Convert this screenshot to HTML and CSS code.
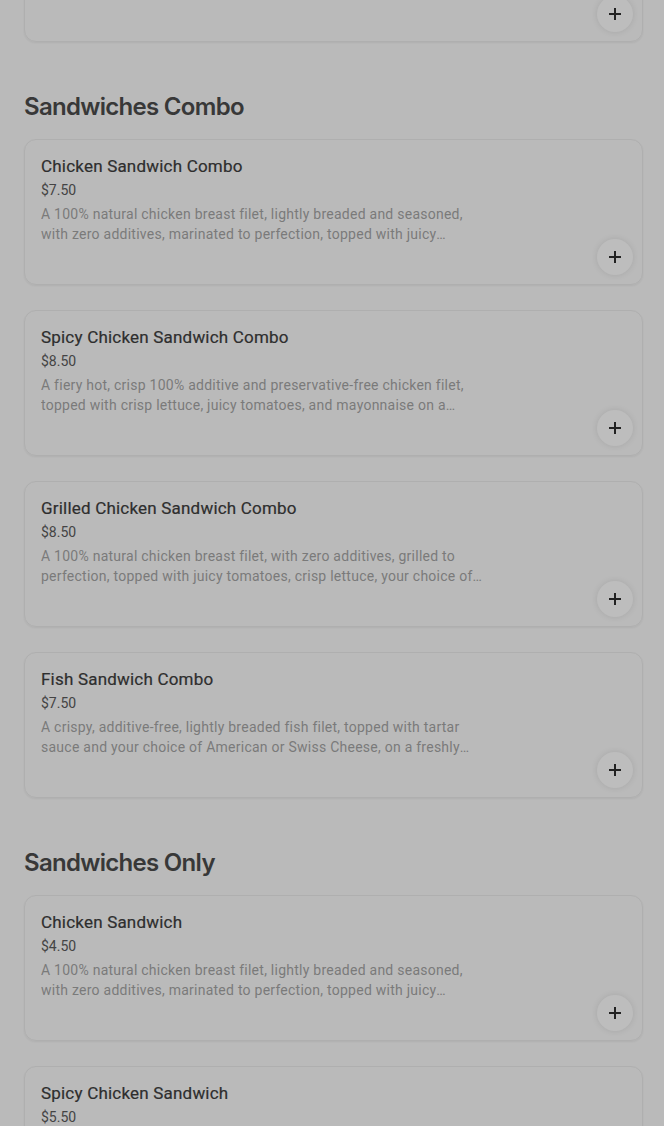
FILE: index.html
```html
<!DOCTYPE html>
<html>
<head>
<meta charset="UTF-8">
<title>Menu</title>
<link rel="stylesheet" href="styles.css">
</head>
<body>
<div id="menu">

<div class="section first">
<div class="item">
<div class="info">
<div class="name">Spicy Deluxe Meal</div>
<div class="price">$9.50</div>
<div class="desc">A fiery hot, crisp chicken filet topped with fresh lettuce, juicy tomatoes and pepper jack cheese, served with your choice of fries and a drink.</div>
</div>
<button class="add"><svg width="12" height="12" viewBox="0 0 12 12"><path d="M6 0v12M0 6h12" stroke="#222" stroke-width="2"/></svg></button>
</div>
</div>

<div class="section">
<h2>Sandwiches Combo</h2>
<div class="item">
<div class="info">
<div class="name">Chicken Sandwich Combo</div>
<div class="price">$7.50</div>
<div class="desc">A 100% natural chicken breast filet, lightly breaded and seasoned, with zero additives, marinated to perfection, topped with juicy pickles, on a toasted buttered bun.</div>
</div>
<button class="add"><svg width="12" height="12" viewBox="0 0 12 12"><path d="M6 0v12M0 6h12" stroke="#222" stroke-width="2"/></svg></button>
</div>
<div class="item">
<div class="info">
<div class="name">Spicy Chicken Sandwich Combo</div>
<div class="price">$8.50</div>
<div class="desc">A fiery hot, crisp 100% additive and preservative-free chicken filet, topped with crisp lettuce, juicy tomatoes, and mayonnaise on a toasted bun.</div>
</div>
<button class="add"><svg width="12" height="12" viewBox="0 0 12 12"><path d="M6 0v12M0 6h12" stroke="#222" stroke-width="2"/></svg></button>
</div>
<div class="item">
<div class="info">
<div class="name">Grilled Chicken Sandwich Combo</div>
<div class="price">$8.50</div>
<div class="desc">A 100% natural chicken breast filet, with zero additives, grilled to perfection, topped with juicy tomatoes, crisp lettuce, your choice of cheese on a toasted bun.</div>
</div>
<button class="add"><svg width="12" height="12" viewBox="0 0 12 12"><path d="M6 0v12M0 6h12" stroke="#222" stroke-width="2"/></svg></button>
</div>
<div class="item">
<div class="info">
<div class="name">Fish Sandwich Combo</div>
<div class="price">$7.50</div>
<div class="desc">A crispy, additive-free, lightly breaded fish filet, topped with tartar sauce and your choice of American or Swiss Cheese, on a freshly toasted bun.</div>
</div>
<button class="add"><svg width="12" height="12" viewBox="0 0 12 12"><path d="M6 0v12M0 6h12" stroke="#222" stroke-width="2"/></svg></button>
</div>
</div>

<div class="section">
<h2>Sandwiches Only</h2>
<div class="item">
<div class="info">
<div class="name">Chicken Sandwich</div>
<div class="price">$4.50</div>
<div class="desc">A 100% natural chicken breast filet, lightly breaded and seasoned, with zero additives, marinated to perfection, topped with juicy pickles, on a toasted buttered bun.</div>
</div>
<button class="add"><svg width="12" height="12" viewBox="0 0 12 12"><path d="M6 0v12M0 6h12" stroke="#222" stroke-width="2"/></svg></button>
</div>
<div class="item">
<div class="info">
<div class="name">Spicy Chicken Sandwich</div>
<div class="price">$5.50</div>
<div class="desc">A fiery hot, crisp 100% additive and preservative-free chicken filet, topped with crisp lettuce, juicy tomatoes, and mayonnaise on a toasted bun.</div>
</div>
<button class="add"><svg width="12" height="12" viewBox="0 0 12 12"><path d="M6 0v12M0 6h12" stroke="#222" stroke-width="2"/></svg></button>
</div>
</div>

</div>
</body>
</html>
```

FILE: styles.css
```css
body{margin:0;background-color:#bababa;font-family:Roboto, "Liberation Sans", sans-serif;color:#363636;overflow:hidden;}
#menu{padding:0 21px 0 24px;}
.section{margin-top:51px;}
.section.first{margin-top:-104px;}
h2{margin:0 0 18px 0;font-family:Inter, sans-serif;font-size:24px;font-weight:600;letter-spacing:-0.7px;line-height:28px;color:#383838;}
.item{display:flex;justify-content:space-between;box-sizing:border-box;min-height:146px;margin-bottom:25px;padding:15px 9px 9px 16px;border:1px solid #afafaf;border-radius:12px;box-shadow:0 1px 2px rgba(0,0,0,0.06);}
.info{max-width:445px;}
.name{font-size:17px;line-height:22px;font-weight:400;color:#2e2e2e;letter-spacing:0.2px;-webkit-text-stroke:0.2px #2e2e2e;}
.price{margin-top:3px;font-size:14px;line-height:20px;color:#444;}
.desc{margin-top:4px;font-size:14px;line-height:20px;letter-spacing:0.25px;color:#7a7a7a;display:-webkit-box;-webkit-line-clamp:2;-webkit-box-orient:vertical;overflow:hidden;}
.add{align-self:flex-end;display:flex;align-items:center;justify-content:center;width:36px;height:36px;border:none;border-radius:50%;background-color:#bdbdbd;box-shadow:0 0 6px rgba(0,0,0,0.1);padding:0;}
```
